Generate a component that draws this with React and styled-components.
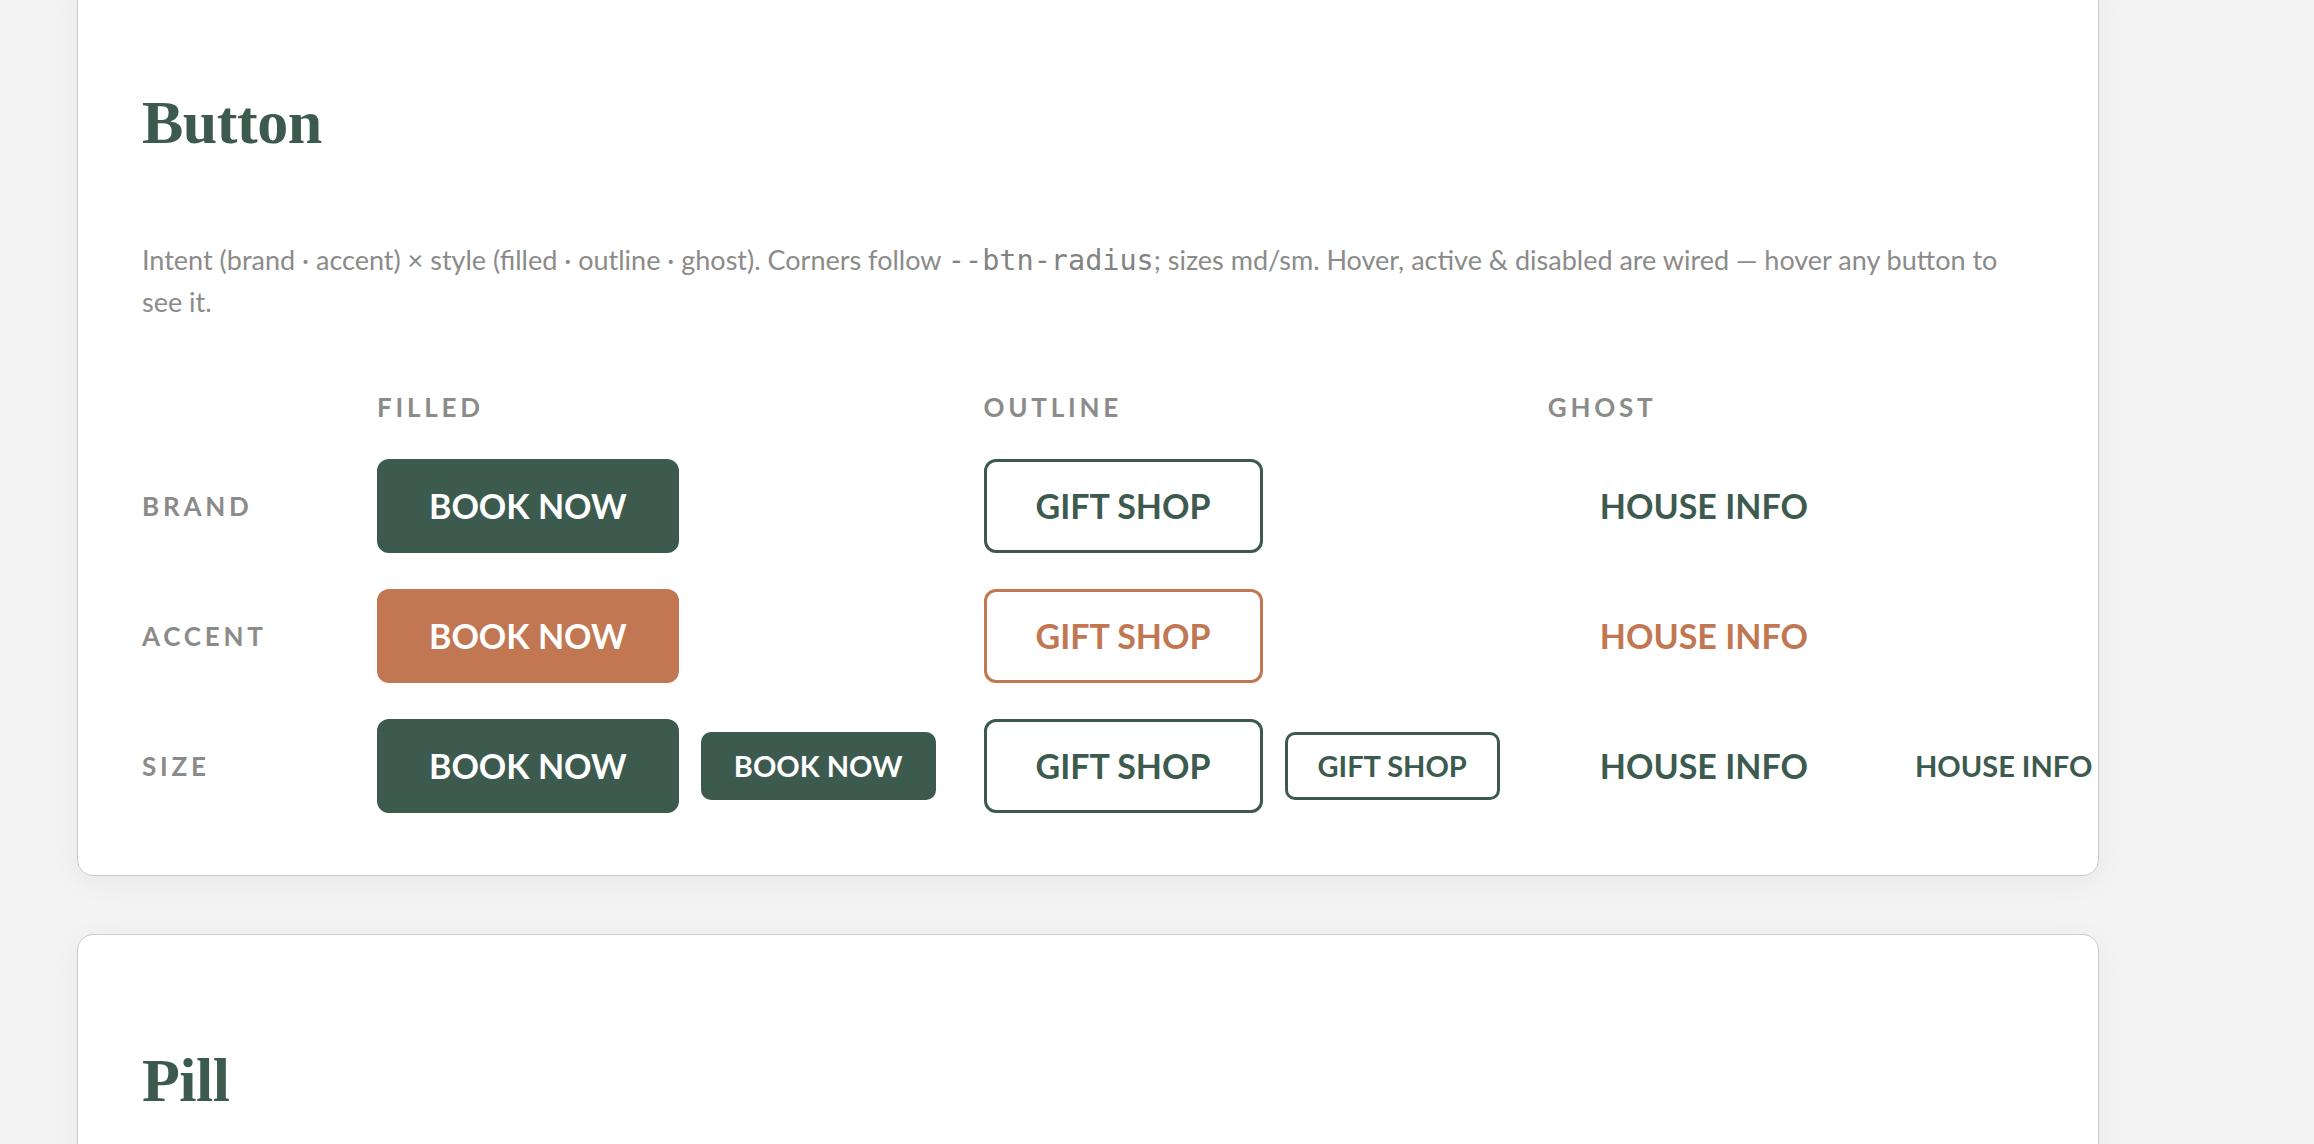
import styled, { createGlobalStyle } from "styled-components";

const GlobalStyle = createGlobalStyle`
  body {
    margin: 0;
    background: #f3f3f3;
    font-family: Lato, "Noto Sans", sans-serif;
  }
`;

const colours = {
  brand: "#3d5a4f",
  accent: "#c17752",
  muted: "#8b8b8a",
};

const Page = styled.main`
  display: flex;
  flex-direction: column;
  gap: 58px;
  padding: 0 0 80px 77px;
  /* page is shown scrolled a little */
  margin-top: -24px;
`;

const Card = styled.section`
  width: 2022px;
  box-sizing: border-box;
  background: #fff;
  border: 1.5px solid #cbcbcb;
  border-radius: 16px;
  box-shadow: 0 6px 28px rgba(0, 0, 0, 0.05);
  padding: 111px 64px 62px;
`;

const Title = styled.h2`
  margin: 0 0 83px;
  font-family: "Liberation Serif", serif;
  font-weight: 700;
  font-size: 62px;
  line-height: 68px;
  letter-spacing: -0.5px;
  color: ${colours.brand};
`;

const Intro = styled.p`
  margin: 0 0 70px;
  font-family: Lato, sans-serif;
  font-size: 27px;
  line-height: 41px;
  color: ${colours.muted};
`;

const Code = styled.code`
  font-family: "DejaVu Sans Mono", monospace;
  font-size: 28.5px;
  color: #838382;
`;

const Matrix = styled.div`
  display: grid;
  grid-template-columns: 187px auto auto auto;
  column-gap: 48px;
  row-gap: 36px;
  align-items: center;
  justify-content: start;
`;

const Label = styled.div`
  font-family: Lato, sans-serif;
  font-weight: 700;
  font-size: 26px;
  line-height: 31px;
  letter-spacing: 0.145em;
  text-transform: uppercase;
  color: ${colours.muted};
`;

const Cell = styled.div`
  display: flex;
  align-items: center;
  gap: 22px;
`;

const Button = styled.button`
  font-family: Lato, sans-serif;
  font-weight: 700;
  text-transform: uppercase;
  white-space: nowrap;
  border: 3px solid transparent;
  border-radius: ${(p) => (p.size === "sm" ? "10px" : "12px")};
  cursor: pointer;
  font-size: ${(p) => (p.size === "sm" ? "29px" : "34px")};
  line-height: ${(p) => (p.size === "sm" ? "30px" : "36px")};
  padding: ${(p) => (p.size === "sm" ? "16px 30px" : "26px 49px")};
  background: ${(p) =>
    p.variant === "filled" ? colours[p.intent] : "transparent"};
  border-color: ${(p) =>
    p.variant === "ghost" ? "transparent" : colours[p.intent]};
  color: ${(p) => (p.variant === "filled" ? "#fff" : colours[p.intent])};
  transition: filter 0.15s ease;

  &:hover {
    filter: brightness(0.92);
  }
`;

const texts = {
  filled: "Book now",
  outline: "Gift shop",
  ghost: "House info",
};

const variants = ["filled", "outline", "ghost"];

const ButtonCard = () => (
  <Card>
    <Title>Button</Title>
    <Intro>
      Intent (brand · accent) × style (filled · outline · ghost). Corners
      follow <Code>--btn-radius</Code>; sizes md/sm. Hover, active &amp;
      disabled are wired — hover any button to see it.
    </Intro>
    <Matrix>
      <div />
      {variants.map((v) => (
        <Label key={v}>{v}</Label>
      ))}

      {["brand", "accent"].map((intent) => [
        <Label key={intent}>{intent}</Label>,
        ...variants.map((v) => (
          <Cell key={intent + v}>
            <Button intent={intent} variant={v}>
              {texts[v]}
            </Button>
          </Cell>
        )),
      ])}

      <Label>Size</Label>
      {variants.map((v) => (
        <Cell key={"size" + v}>
          <Button intent="brand" variant={v}>
            {texts[v]}
          </Button>
          <Button intent="brand" variant={v} size="sm">
            {texts[v]}
          </Button>
        </Cell>
      ))}
    </Matrix>
  </Card>
);

const PillCard = () => (
  <Card>
    <Title>Pill</Title>
  </Card>
);

const App = () => (
  <>
    <GlobalStyle />
    <Page>
      <ButtonCard />
      <PillCard />
    </Page>
  </>
);

export default App;
